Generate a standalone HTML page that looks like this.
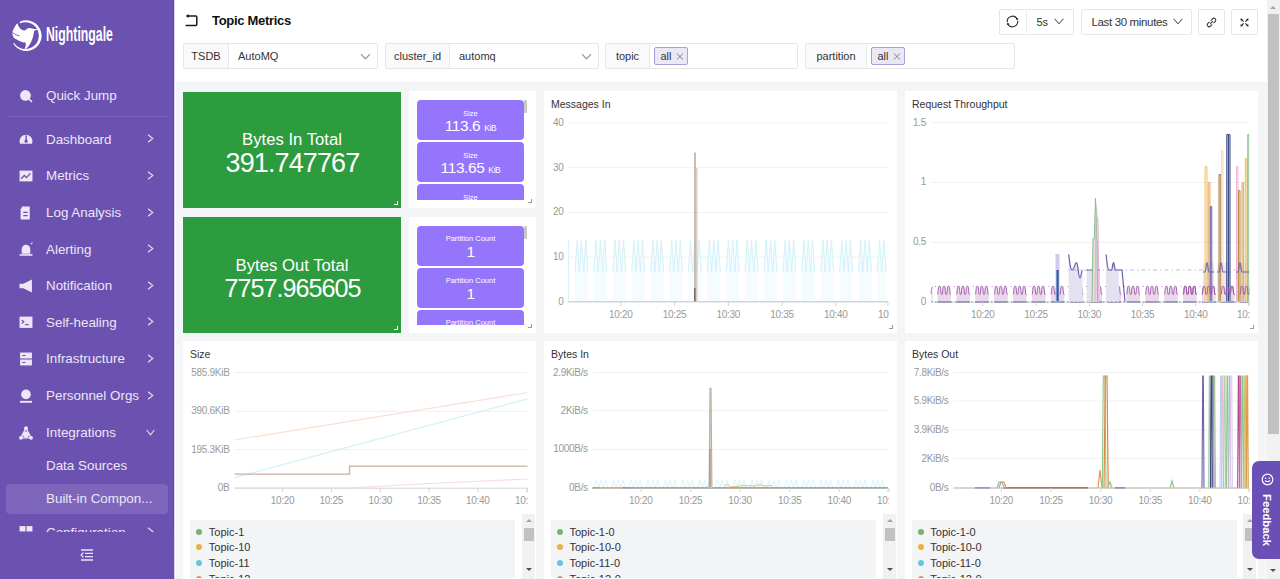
<!DOCTYPE html><html><head><meta charset="utf-8"><style>
*{box-sizing:border-box;margin:0;padding:0}
html,body{width:1280px;height:579px;overflow:hidden;background:#fff;font-family:"Liberation Sans", sans-serif;}
.a{position:absolute}
.sb{left:0;top:0;width:174px;height:579px;background:#6b51b0;box-shadow:inset -1px 0 0 #6049a6, 0.5px 0 0 #b3a6d6}
.mi{position:absolute;left:46px;font-size:13.4px;color:#ece6f7;white-space:nowrap;line-height:16px}
.chev{position:absolute;left:146px;width:6px;height:6px;border-right:1.3px solid #e6def5;border-top:1.3px solid #e6def5;transform:rotate(45deg)}
.chevd{position:absolute;left:146px;width:6px;height:6px;border-right:1.3px solid #e6def5;border-bottom:1.3px solid #e6def5;transform:rotate(45deg)}
.content{left:176px;top:82px;width:1091px;height:497px;background:#f4f5f7}
.fl{position:absolute;top:43px;height:26px;border:1px solid #e6e6e6;border-radius:2px;background:#fff}
.fll{position:absolute;left:0;top:0;height:24px;background:#fafafa;border-right:1px solid #e8e8e8;font-size:11px;color:#333;line-height:24px;text-align:center}
.flv{position:absolute;top:0;font-size:11px;color:#333;line-height:24px}
.tag{position:absolute;top:3.2px;height:17.6px;background:#ebe8f6;border:1px solid #ab9fd6;border-radius:2px;font-size:11px;color:#333;line-height:15px;padding-left:6px}
.btn{position:absolute;top:8.6px;height:26.6px;border:1px solid #e6e6e6;border-radius:2px;background:#fff;font-size:11px;color:#333;line-height:24px}
.pn{position:absolute;background:#fff}
.pt{position:absolute;left:7px;top:5px;font-size:10.5px;color:#333;white-space:nowrap}
.yl{position:absolute;font-size:10px;letter-spacing:-0.3px;color:#999;text-align:right;white-space:nowrap;line-height:12px}
.xl{position:absolute;font-size:10px;letter-spacing:-0.3px;color:#999;white-space:nowrap;line-height:12px}
.grn{position:absolute;background:#2c9c3f;color:#fff;text-align:center}
.card{position:absolute;left:8px;width:107px;height:40px;background:#9575fb;border-radius:4px;color:#fff;text-align:center}
.lg{position:absolute;background:#f3f4f6;font-size:11px;color:#333}
.li{position:absolute;left:18px;white-space:nowrap;line-height:14px}
.dot{position:absolute;left:-12px;top:4px;width:6px;height:6px;border-radius:50%}
</style></head><body><div class="a sb">
<svg class="a" style="left:10px;top:17px" width="34" height="36" viewBox="0 0 34 36">
<path d="M9.83 4.83 A15.3 15.3 0 1 1 3.32 26.81 L4.04 25.80 A13.4 13.4 0 1 0 9.74 6.56 Z" fill="#fff"/>
<path d="M7.46 6.2 C8.5 10 11 13.4 14.3 13.4 C16 13.4 17 10.9 18.6 10.9 C20.5 10.9 22 11.8 29.2 12.1 C26.5 12.8 24.8 13.3 24.2 14 C23.8 16 23.4 17.5 23.3 18.6 C22.8 21 22.2 23 21.1 24.9 C19.5 28.5 17 31.5 13.4 33.9 C14.8 32 15.5 30 15.8 28 C15.9 27 15.8 26.2 15.5 25.5 C13 25.3 11 24.8 9.3 23.9 C7 22.8 5 21.8 3.7 20.5 C2.8 19 2.3 17.5 2.2 15.8 C2.5 14.3 3 13 3.7 11.8 C4.8 9.5 6 7.5 7.46 6.2 Z" fill="#fff"/>
<path d="M2.3 15.4 C4.5 17.2 7 18.4 9.6 18.8" fill="none" stroke="#6b51b0" stroke-width="0.9"/>
</svg>
<div class="a" style="left:45.5px;top:22px;font-size:21px;font-weight:700;color:#fff;transform:scaleX(0.585);transform-origin:0 0;letter-spacing:0px;line-height:24px">Nightingale</div>
<div class="a" style="left:7px;top:116px;width:162px;height:1px;background:#7a62bb"></div>
<div class="a" style="left:6px;top:484px;width:162px;height:30px;background:#7d66bc;border-radius:4px"></div>
<div class="mi" style="top:88.0px">Quick Jump</div>
<svg class="a" style="left:19px;top:88.5px" width="14" height="14" viewBox="0 0 13 13"><circle cx="6" cy="6" r="5" fill="#ece6f7"/><path d="M9.5 9.5 L12 12" stroke="#ece6f7" stroke-width="1.5"/></svg>
<div class="mi" style="top:131.5px">Dashboard</div>
<svg class="a" style="left:19px;top:132.0px" width="14" height="14" viewBox="0 0 13 13"><path d="M1 11 A6 6 0 1 1 12 11 Z" fill="#ece6f7"/><rect x="6" y="3" width="1.3" height="5" fill="#6b51b0"/><circle cx="6.6" cy="8.5" r="1.5" fill="#6b51b0"/></svg>
<svg class="a" style="left:147px;top:134.0px" width="7" height="9" viewBox="0 0 7 9"><path d="M1 0.7 L5.8 4.5 L1 8.3" stroke="#e6def5" stroke-width="1.1" fill="none"/></svg>
<div class="mi" style="top:168.3px">Metrics</div>
<svg class="a" style="left:19px;top:168.8px" width="14" height="14" viewBox="0 0 13 13"><rect x="0.5" y="1.5" width="12" height="10" fill="#ece6f7"/><path d="M2 9 L5 6 L7 8 L10.5 4" stroke="#6b51b0" stroke-width="1.2" fill="none"/></svg>
<svg class="a" style="left:147px;top:170.8px" width="7" height="9" viewBox="0 0 7 9"><path d="M1 0.7 L5.8 4.5 L1 8.3" stroke="#e6def5" stroke-width="1.1" fill="none"/></svg>
<div class="mi" style="top:205.0px">Log Analysis</div>
<svg class="a" style="left:19px;top:205.5px" width="14" height="14" viewBox="0 0 13 13"><path d="M3 0.5 H10 V12.5 H1.5 V3 Z" fill="#ece6f7"/><path d="M4 6 H8 M4 9 H8" stroke="#6b51b0" stroke-width="1.1"/></svg>
<svg class="a" style="left:147px;top:207.5px" width="7" height="9" viewBox="0 0 7 9"><path d="M1 0.7 L5.8 4.5 L1 8.3" stroke="#e6def5" stroke-width="1.1" fill="none"/></svg>
<div class="mi" style="top:241.5px">Alerting</div>
<svg class="a" style="left:19px;top:242.0px" width="14" height="14" viewBox="0 0 13 13"><path d="M2.5 11 V6.5 A4 4 0 0 1 10.5 6.5 V11 Z" fill="#ece6f7"/><rect x="0.5" y="11.3" width="12" height="1.5" fill="#ece6f7"/><path d="M11 2 L12.5 0.5" stroke="#ece6f7" stroke-width="1"/></svg>
<svg class="a" style="left:147px;top:244.0px" width="7" height="9" viewBox="0 0 7 9"><path d="M1 0.7 L5.8 4.5 L1 8.3" stroke="#e6def5" stroke-width="1.1" fill="none"/></svg>
<div class="mi" style="top:278.0px">Notification</div>
<svg class="a" style="left:19px;top:278.5px" width="14" height="14" viewBox="0 0 13 13"><path d="M0.5 4.5 H4 L12 0.5 V12.5 L4 8.5 H0.5 Z" fill="#ece6f7"/></svg>
<svg class="a" style="left:147px;top:280.5px" width="7" height="9" viewBox="0 0 7 9"><path d="M1 0.7 L5.8 4.5 L1 8.3" stroke="#e6def5" stroke-width="1.1" fill="none"/></svg>
<div class="mi" style="top:314.7px">Self-healing</div>
<svg class="a" style="left:19px;top:315.2px" width="14" height="14" viewBox="0 0 13 13"><rect x="0.5" y="1.5" width="12" height="10.5" fill="#ece6f7"/><path d="M2.5 4.5 L4.5 6.3 L2.5 8" stroke="#6b51b0" stroke-width="1.1" fill="none"/><path d="M5.5 9 H9" stroke="#6b51b0" stroke-width="1.1"/></svg>
<svg class="a" style="left:147px;top:317.2px" width="7" height="9" viewBox="0 0 7 9"><path d="M1 0.7 L5.8 4.5 L1 8.3" stroke="#e6def5" stroke-width="1.1" fill="none"/></svg>
<div class="mi" style="top:351.3px">Infrastructure</div>
<svg class="a" style="left:19px;top:351.8px" width="14" height="14" viewBox="0 0 13 13"><rect x="1" y="0.5" width="11" height="5.5" fill="#ece6f7"/><rect x="1" y="7" width="11" height="5.5" fill="#ece6f7"/><path d="M3 3.3 H6 M3 9.8 H6" stroke="#6b51b0" stroke-width="1"/></svg>
<svg class="a" style="left:147px;top:353.8px" width="7" height="9" viewBox="0 0 7 9"><path d="M1 0.7 L5.8 4.5 L1 8.3" stroke="#e6def5" stroke-width="1.1" fill="none"/></svg>
<div class="mi" style="top:388.0px">Personnel Orgs</div>
<svg class="a" style="left:19px;top:388.5px" width="14" height="14" viewBox="0 0 13 13"><circle cx="6.5" cy="5" r="4.5" fill="#ece6f7"/><rect x="1" y="11" width="11" height="1.8" fill="#ece6f7"/></svg>
<svg class="a" style="left:147px;top:390.5px" width="7" height="9" viewBox="0 0 7 9"><path d="M1 0.7 L5.8 4.5 L1 8.3" stroke="#e6def5" stroke-width="1.1" fill="none"/></svg>
<div class="mi" style="top:425.0px">Integrations</div>
<svg class="a" style="left:19px;top:425.5px" width="14" height="14" viewBox="0 0 13 13"><circle cx="6.5" cy="2" r="1.8" fill="#ece6f7"/><circle cx="1.8" cy="11" r="1.8" fill="#ece6f7"/><circle cx="11.2" cy="11" r="1.8" fill="#ece6f7"/><path d="M6.5 2 L1.8 11 H11.2 Z" fill="none" stroke="#ece6f7" stroke-width="1.3"/><circle cx="6.5" cy="8" r="2.8" fill="#ece6f7"/></svg>
<svg class="a" style="left:146px;top:429.0px" width="9" height="7" viewBox="0 0 9 7"><path d="M0.7 1 L4.5 5.8 L8.3 1" stroke="#e6def5" stroke-width="1.1" fill="none"/></svg>
<div class="mi" style="top:458.4px">Data Sources</div>
<div class="mi" style="top:491.4px">Built-in Compon...</div>
<div class="mi" style="top:524.5px">Configuration</div>
<svg class="a" style="left:19px;top:525.0px" width="14" height="14" viewBox="0 0 13 13"><rect x="0.5" y="1" width="5.5" height="5" fill="#ece6f7"/><rect x="7" y="1" width="5.5" height="5" fill="#ece6f7"/></svg>
<svg class="a" style="left:147px;top:527.0px" width="7" height="9" viewBox="0 0 7 9"><path d="M1 0.7 L5.8 4.5 L1 8.3" stroke="#e6def5" stroke-width="1.1" fill="none"/></svg>
<div class="a" style="left:0;top:532px;width:174px;height:47px;background:#6b51b0"></div>
<svg class="a" style="left:80px;top:549px" width="14" height="12" viewBox="0 0 14 12"><path d="M1 1 H13 M5 4.3 H13 M5 7.6 H13 M1 11 H13" stroke="#ece6f7" stroke-width="1.3"/><path d="M3.5 3.5 L1 6 L3.5 8.5" stroke="#ece6f7" stroke-width="1.1" fill="none"/></svg>
</div>
<svg class="a" style="left:184px;top:13px" width="15" height="15" viewBox="0 0 15 15"><path d="M3.5 3 H11.7 Q12.8 3 12.8 4.1 V11.3 Q12.8 12.5 11.7 12.5 H1.6" stroke="#1a1a1a" stroke-width="1.5" fill="none"/><path d="M1.8 3 L4.6 0.9 V5.1 Z" fill="#1a1a1a"/></svg>
<div class="a" style="left:212px;top:13px;font-size:13px;font-weight:700;color:#111;white-space:nowrap;letter-spacing:-0.3px">Topic Metrics</div>
<div class="fl" style="left:183px;width:194.5px">
<div class="fll" style="width:45px">TSDB</div>
<div class="flv" style="left:54px">AutoMQ</div>
<div class="a" style="left:177.5px;top:7px;width:7px;height:7px;border-right:1px solid #888;border-bottom:1px solid #888;transform:rotate(45deg)"></div>
</div>
<div class="fl" style="left:385px;width:213.5px">
<div class="fll" style="width:64px">cluster_id</div>
<div class="flv" style="left:73px">automq</div>
<div class="a" style="left:196.5px;top:7px;width:7px;height:7px;border-right:1px solid #888;border-bottom:1px solid #888;transform:rotate(45deg)"></div>
</div>
<div class="fl" style="left:605px;width:192.5px">
<div class="fll" style="width:44px">topic</div>
<div class="tag" style="left:47.5px;width:34.5px;line-height:16px">all<svg style="position:absolute;left:21.5px;top:4.8px" width="8" height="7" viewBox="0 0 8 7"><path d="M0.8 0.5 L7 6.5 M7 0.5 L0.8 6.5" stroke="#777" stroke-width="0.9"/></svg></div>
</div>
<div class="fl" style="left:805px;width:210.0px">
<div class="fll" style="width:61px">partition</div>
<div class="tag" style="left:64.5px;width:34.5px;line-height:16px">all<svg style="position:absolute;left:21.5px;top:4.8px" width="8" height="7" viewBox="0 0 8 7"><path d="M0.8 0.5 L7 6.5 M7 0.5 L0.8 6.5" stroke="#777" stroke-width="0.9"/></svg></div>
</div>
<div class="btn" style="left:999px;width:27.5px"><svg class="a" style="left:5px;top:4.3px" width="15" height="15" viewBox="0 0 15 15"><path d="M12.09 5.06 A5.2 5.2 0 0 0 2.35 8.22" stroke="#333" stroke-width="1.15" fill="none"/><path d="M2.91 9.94 A5.2 5.2 0 0 0 12.65 6.78" stroke="#333" stroke-width="1.15" fill="none"/><circle cx="12.09" cy="5.06" r="1.05" fill="#222"/><circle cx="2.91" cy="9.94" r="1.05" fill="#222"/></svg></div>
<div class="btn" style="left:1026px;width:48px;border-left:1px solid #ececec"><span class="a" style="left:9.5px;font-size:11px">5s</span><svg class="a" style="left:27px;top:8px" width="10" height="7" viewBox="0 0 10 7"><path d="M0.6 0.8 L5 5.8 L9.4 0.8" stroke="#333" stroke-width="1" fill="none"/></svg></div>
<div class="btn" style="left:1081px;width:111px"><span class="a" style="left:9.5px;font-size:11.5px;letter-spacing:-0.35px">Last 30 minutes</span><svg class="a" style="left:91px;top:8px" width="10" height="7" viewBox="0 0 10 7"><path d="M0.6 0.8 L5 5.8 L9.4 0.8" stroke="#333" stroke-width="1" fill="none"/></svg></div>
<div class="btn" style="left:1198px;width:26.5px"><svg class="a" style="left:6px;top:6px" width="13" height="13" viewBox="0 0 13 13"><g transform="rotate(-45 6.5 6.5)"><path d="M5.6 4.6 H3.2 A1.9 1.9 0 0 0 3.2 8.4 H5.6" stroke="#333" stroke-width="1.05" fill="none"/><path d="M7.4 4.6 H9.8 A1.9 1.9 0 0 1 9.8 8.4 H7.4" stroke="#333" stroke-width="1.05" fill="none"/><path d="M4.6 6.5 H8.4" stroke="#333" stroke-width="1.05"/></g></svg></div>
<div class="btn" style="left:1231px;width:26.5px"><svg class="a" style="left:6px;top:6px" width="13" height="13" viewBox="0 0 13 13"><path d="M3.2 3.2 L5.6 5.6 M9.8 3.2 L7.4 5.6 M3.2 9.8 L5.6 7.4 M9.8 9.8 L7.4 7.4" stroke="#222" stroke-width="1.05"/><path d="M2.4 2.4 L4.9 2.9 L2.9 4.9Z M10.6 2.4 L8.1 2.9 L10.1 4.9Z M2.4 10.6 L4.9 10.1 L2.9 8.1Z M10.6 10.6 L8.1 10.1 L10.1 8.1Z" fill="#222"/></svg></div>
<div class="a content"></div>
<div class="grn" style="left:183px;top:91.5px;width:218px;height:116.0px">
<div class="a" style="left:0;width:218px;top:40.3px;font-size:16.7px;line-height:16.7px;white-space:nowrap">Bytes In Total</div>
<div class="a" style="left:0;width:218px;top:58.9px;font-size:27px;line-height:27px;white-space:nowrap;letter-spacing:-0.9px;text-indent:0.9px">391.747767</div>
<div class="a" style="left:211px;top:109.0px;width:4px;height:4px;border-right:1px solid #fff;border-bottom:1px solid #fff"></div>
</div>
<div class="grn" style="left:183px;top:216.5px;width:218px;height:116.5px">
<div class="a" style="left:0;width:218px;top:41.5px;font-size:16.7px;line-height:16.7px;white-space:nowrap">Bytes Out Total</div>
<div class="a" style="left:0;width:218px;top:59.6px;font-size:25.2px;line-height:25.2px;white-space:nowrap;letter-spacing:-1.0px;text-indent:1.0px">7757.965605</div>
<div class="a" style="left:211px;top:109.5px;width:4px;height:4px;border-right:1px solid #fff;border-bottom:1px solid #fff"></div>
</div>
<div class="pn" style="left:409px;top:91px;width:127px;height:116.5px;overflow:hidden">
<div class="a" style="left:0;top:9px;width:127px;height:99.5px;overflow:hidden">
<div class="card" style="top:0.0px">
<div class="a" style="left:0;width:107px;top:8.5px;font-size:7.5px;line-height:9px">Size</div>
<div class="a" style="left:0;width:107px;top:17px;font-size:15.5px;line-height:18px;white-space:nowrap;letter-spacing:-0.4px">113.6 <span style="font-size:8.5px">KiB</span></div>
</div>
<div class="card" style="top:42.2px">
<div class="a" style="left:0;width:107px;top:8.5px;font-size:7.5px;line-height:9px">Size</div>
<div class="a" style="left:0;width:107px;top:17px;font-size:15.5px;line-height:18px;white-space:nowrap;letter-spacing:-0.4px">113.65 <span style="font-size:8.5px">KiB</span></div>
</div>
<div class="card" style="top:84.4px">
<div class="a" style="left:0;width:107px;top:8.5px;font-size:7.5px;line-height:9px">Size</div>
<div class="a" style="left:0;width:107px;top:17px;font-size:15.5px;line-height:18px;white-space:nowrap;letter-spacing:-0.4px">113.6 <span style="font-size:8.5px">KiB</span></div>
</div>
</div>
<div class="a" style="left:115px;top:9px;width:3px;height:13px;background:#c8c8c8;border-radius:1px"></div>
<div class="a" style="left:119px;top:107.5px;width:4px;height:4px;border-right:1px solid #999;border-bottom:1px solid #999"></div>
</div>
<div class="pn" style="left:409px;top:216.5px;width:127px;height:116.5px;overflow:hidden">
<div class="a" style="left:0;top:9px;width:127px;height:99.5px;overflow:hidden">
<div class="card" style="top:0.0px">
<div class="a" style="left:0;width:107px;top:8.5px;font-size:7.5px;line-height:9px">Partition Count</div>
<div class="a" style="left:0;width:107px;top:17px;font-size:15.5px;line-height:18px;white-space:nowrap;letter-spacing:-0.4px">1</div>
</div>
<div class="card" style="top:42.2px">
<div class="a" style="left:0;width:107px;top:8.5px;font-size:7.5px;line-height:9px">Partition Count</div>
<div class="a" style="left:0;width:107px;top:17px;font-size:15.5px;line-height:18px;white-space:nowrap;letter-spacing:-0.4px">1</div>
</div>
<div class="card" style="top:84.4px">
<div class="a" style="left:0;width:107px;top:8.5px;font-size:7.5px;line-height:9px">Partition Count</div>
<div class="a" style="left:0;width:107px;top:17px;font-size:15.5px;line-height:18px;white-space:nowrap;letter-spacing:-0.4px">1</div>
</div>
</div>
<div class="a" style="left:115px;top:9px;width:3px;height:13px;background:#c8c8c8;border-radius:1px"></div>
<div class="a" style="left:119px;top:107.5px;width:4px;height:4px;border-right:1px solid #999;border-bottom:1px solid #999"></div>
</div>
<div class="pn" style="left:544px;top:91px;width:353.0px;height:242.0px;overflow:hidden">
<div class="pt" style="top:6.5px">Messages In</div>
<svg class="a" style="left:0;top:0" width="353.0" height="242.0" viewBox="544 91 353.0 242.0"><line x1="568" y1="123.0" x2="888" y2="123.0" stroke="#f1f1f1" stroke-width="1"/><line x1="568" y1="167.7" x2="888" y2="167.7" stroke="#f1f1f1" stroke-width="1"/><line x1="568" y1="212.4" x2="888" y2="212.4" stroke="#f1f1f1" stroke-width="1"/><line x1="568" y1="257.0" x2="888" y2="257.0" stroke="#f1f1f1" stroke-width="1"/><defs><clipPath id="c54491"><rect x="567" y="91" width="321.5" height="213"/></clipPath></defs><g clip-path="url(#c54491)"><polygon points="575.0,302 575.0,272.0 577.2,240.0 579.3,272.0 581.5,240.0 583.7,272.0 585.8,240.0 588.0,272.0 588.0,302" fill="#f4fcfd"/><polyline points="575.0,272.0 577.2,240.0 579.3,272.0 581.5,240.0 583.7,272.0 585.8,240.0 588.0,272.0" fill="none" stroke="#cff1f7" stroke-width="0.9" opacity="1"/><polygon points="593.9,302 593.9,272.0 596.1,240.0 598.2,272.0 600.4,240.0 602.6,272.0 604.7,240.0 606.9,272.0 606.9,302" fill="#f4fcfd"/><polyline points="593.9,272.0 596.1,240.0 598.2,272.0 600.4,240.0 602.6,272.0 604.7,240.0 606.9,272.0" fill="none" stroke="#cff1f7" stroke-width="0.9" opacity="1"/><polygon points="612.8,302 612.8,272.0 615.0,240.0 617.1,272.0 619.3,240.0 621.5,272.0 623.6,240.0 625.8,272.0 625.8,302" fill="#f4fcfd"/><polyline points="612.8,272.0 615.0,240.0 617.1,272.0 619.3,240.0 621.5,272.0 623.6,240.0 625.8,272.0" fill="none" stroke="#cff1f7" stroke-width="0.9" opacity="1"/><polygon points="631.7,302 631.7,272.0 633.9,240.0 636.0,272.0 638.2,240.0 640.4,272.0 642.5,240.0 644.7,272.0 644.7,302" fill="#f4fcfd"/><polyline points="631.7,272.0 633.9,240.0 636.0,272.0 638.2,240.0 640.4,272.0 642.5,240.0 644.7,272.0" fill="none" stroke="#cff1f7" stroke-width="0.9" opacity="1"/><polygon points="650.6,302 650.6,272.0 652.8,240.0 654.9,272.0 657.1,240.0 659.3,272.0 661.4,240.0 663.6,272.0 663.6,302" fill="#f4fcfd"/><polyline points="650.6,272.0 652.8,240.0 654.9,272.0 657.1,240.0 659.3,272.0 661.4,240.0 663.6,272.0" fill="none" stroke="#cff1f7" stroke-width="0.9" opacity="1"/><polygon points="669.5,302 669.5,272.0 671.7,240.0 673.8,272.0 676.0,240.0 678.2,272.0 680.3,240.0 682.5,272.0 682.5,302" fill="#f4fcfd"/><polyline points="669.5,272.0 671.7,240.0 673.8,272.0 676.0,240.0 678.2,272.0 680.3,240.0 682.5,272.0" fill="none" stroke="#cff1f7" stroke-width="0.9" opacity="1"/><polygon points="688.4,302 688.4,272.0 690.6,240.0 692.7,272.0 694.9,240.0 697.1,272.0 699.2,240.0 701.4,272.0 701.4,302" fill="#f4fcfd"/><polyline points="688.4,272.0 690.6,240.0 692.7,272.0 694.9,240.0 697.1,272.0 699.2,240.0 701.4,272.0" fill="none" stroke="#cff1f7" stroke-width="0.9" opacity="1"/><polygon points="707.3,302 707.3,272.0 709.5,240.0 711.6,272.0 713.8,240.0 716.0,272.0 718.1,240.0 720.3,272.0 720.3,302" fill="#f4fcfd"/><polyline points="707.3,272.0 709.5,240.0 711.6,272.0 713.8,240.0 716.0,272.0 718.1,240.0 720.3,272.0" fill="none" stroke="#cff1f7" stroke-width="0.9" opacity="1"/><polygon points="726.2,302 726.2,272.0 728.4,240.0 730.5,272.0 732.7,240.0 734.9,272.0 737.0,240.0 739.2,272.0 739.2,302" fill="#f4fcfd"/><polyline points="726.2,272.0 728.4,240.0 730.5,272.0 732.7,240.0 734.9,272.0 737.0,240.0 739.2,272.0" fill="none" stroke="#cff1f7" stroke-width="0.9" opacity="1"/><polygon points="745.1,302 745.1,272.0 747.3,240.0 749.4,272.0 751.6,240.0 753.8,272.0 755.9,240.0 758.1,272.0 758.1,302" fill="#f4fcfd"/><polyline points="745.1,272.0 747.3,240.0 749.4,272.0 751.6,240.0 753.8,272.0 755.9,240.0 758.1,272.0" fill="none" stroke="#cff1f7" stroke-width="0.9" opacity="1"/><polygon points="764.0,302 764.0,272.0 766.2,240.0 768.3,272.0 770.5,240.0 772.7,272.0 774.8,240.0 777.0,272.0 777.0,302" fill="#f4fcfd"/><polyline points="764.0,272.0 766.2,240.0 768.3,272.0 770.5,240.0 772.7,272.0 774.8,240.0 777.0,272.0" fill="none" stroke="#cff1f7" stroke-width="0.9" opacity="1"/><polygon points="782.9,302 782.9,272.0 785.1,240.0 787.2,272.0 789.4,240.0 791.6,272.0 793.7,240.0 795.9,272.0 795.9,302" fill="#f4fcfd"/><polyline points="782.9,272.0 785.1,240.0 787.2,272.0 789.4,240.0 791.6,272.0 793.7,240.0 795.9,272.0" fill="none" stroke="#cff1f7" stroke-width="0.9" opacity="1"/><polygon points="801.8,302 801.8,272.0 804.0,240.0 806.1,272.0 808.3,240.0 810.5,272.0 812.6,240.0 814.8,272.0 814.8,302" fill="#f4fcfd"/><polyline points="801.8,272.0 804.0,240.0 806.1,272.0 808.3,240.0 810.5,272.0 812.6,240.0 814.8,272.0" fill="none" stroke="#cff1f7" stroke-width="0.9" opacity="1"/><polygon points="820.7,302 820.7,272.0 822.9,240.0 825.0,272.0 827.2,240.0 829.4,272.0 831.5,240.0 833.7,272.0 833.7,302" fill="#f4fcfd"/><polyline points="820.7,272.0 822.9,240.0 825.0,272.0 827.2,240.0 829.4,272.0 831.5,240.0 833.7,272.0" fill="none" stroke="#cff1f7" stroke-width="0.9" opacity="1"/><polygon points="839.6,302 839.6,272.0 841.8,240.0 843.9,272.0 846.1,240.0 848.3,272.0 850.4,240.0 852.6,272.0 852.6,302" fill="#f4fcfd"/><polyline points="839.6,272.0 841.8,240.0 843.9,272.0 846.1,240.0 848.3,272.0 850.4,240.0 852.6,272.0" fill="none" stroke="#cff1f7" stroke-width="0.9" opacity="1"/><polygon points="858.5,302 858.5,272.0 860.7,240.0 862.8,272.0 865.0,240.0 867.2,272.0 869.3,240.0 871.5,272.0 871.5,302" fill="#f4fcfd"/><polyline points="858.5,272.0 860.7,240.0 862.8,272.0 865.0,240.0 867.2,272.0 869.3,240.0 871.5,272.0" fill="none" stroke="#cff1f7" stroke-width="0.9" opacity="1"/><polygon points="877.4,302 877.4,272.0 879.6,240.0 881.7,272.0 883.9,240.0 886.1,272.0 886.1,302" fill="#f4fcfd"/><polyline points="877.4,272.0 879.6,240.0 881.7,272.0 883.9,240.0 886.1,272.0" fill="none" stroke="#cff1f7" stroke-width="0.9" opacity="1"/><line x1="568" y1="301.5" x2="888" y2="301.5" stroke="#dccfc2" stroke-width="1.2"/><line x1="568.5" y1="302" x2="568.5" y2="240" stroke="#d2f1f7" stroke-width="0.9"/><line x1="695" y1="302" x2="695" y2="152.5" stroke="#c2b6aa" stroke-width="1.8"/><line x1="696.8" y1="302" x2="696.8" y2="168" stroke="#d0c6bc" stroke-width="1.3"/><line x1="694.8" y1="302" x2="694.8" y2="288" stroke="#7d7060" stroke-width="1.6"/></g><line x1="568" y1="302.0" x2="888" y2="302.0" stroke="#d6d6d6" stroke-width="1"/><line x1="620.8" y1="302.0" x2="620.8" y2="306.0" stroke="#d6d6d6" stroke-width="1"/><line x1="674.6" y1="302.0" x2="674.6" y2="306.0" stroke="#d6d6d6" stroke-width="1"/><line x1="728.4" y1="302.0" x2="728.4" y2="306.0" stroke="#d6d6d6" stroke-width="1"/><line x1="782.2" y1="302.0" x2="782.2" y2="306.0" stroke="#d6d6d6" stroke-width="1"/><line x1="836.0" y1="302.0" x2="836.0" y2="306.0" stroke="#d6d6d6" stroke-width="1"/><line x1="888.0" y1="302.0" x2="888.0" y2="306.0" stroke="#d6d6d6" stroke-width="1"/></svg>
<div class="yl" style="right:333.5px;top:26.0px">40</div>
<div class="yl" style="right:333.5px;top:70.7px">30</div>
<div class="yl" style="right:333.5px;top:115.4px">20</div>
<div class="yl" style="right:333.5px;top:160.0px">10</div>
<div class="yl" style="right:333.5px;top:204.8px">0</div>
<div class="a" style="left:0;top:0;width:344.8px;height:242px;overflow:hidden">
<div class="xl" style="left:56.8px;width:40px;text-align:center;text-indent:-0.3px;top:218.0px">10:20</div>
<div class="xl" style="left:110.6px;width:40px;text-align:center;text-indent:-0.3px;top:218.0px">10:25</div>
<div class="xl" style="left:164.4px;width:40px;text-align:center;text-indent:-0.3px;top:218.0px">10:30</div>
<div class="xl" style="left:218.2px;width:40px;text-align:center;text-indent:-0.3px;top:218.0px">10:35</div>
<div class="xl" style="left:272.0px;width:40px;text-align:center;text-indent:-0.3px;top:218.0px">10:40</div>
<div class="xl" style="left:325.8px;width:40px;text-align:center;text-indent:-0.3px;top:218.0px">10:45</div>
</div>
<div class="a" style="left:345px;top:234px;width:4px;height:4px;border-right:1px solid #999;border-bottom:1px solid #999"></div>
</div>
<div class="pn" style="left:905px;top:91px;width:352.5px;height:242.0px;overflow:hidden">
<div class="pt" style="top:6.5px">Request Throughput</div>
<svg class="a" style="left:0;top:0" width="352.5" height="242.0" viewBox="905 91 352.5 242.0"><line x1="931" y1="122.7" x2="1248.7" y2="122.7" stroke="#f1f1f1" stroke-width="1"/><line x1="931" y1="182.4" x2="1248.7" y2="182.4" stroke="#f1f1f1" stroke-width="1"/><line x1="931" y1="242.4" x2="1248.7" y2="242.4" stroke="#f1f1f1" stroke-width="1"/><defs><clipPath id="c90591"><rect x="930" y="91" width="319.20000000000005" height="213"/></clipPath></defs><g clip-path="url(#c90591)"><path d="M937.5 294.5 C938.40 294.5 938.04 286.3 939.08 286.3 L939.98 286.3 C941.01 286.3 940.65 294.5 941.55 294.5 L942.00 294.5 C942.90 294.5 942.54 286.3 943.58 286.3 L944.48 286.3 C945.51 286.3 945.15 294.5 946.05 294.5 L946.50 294.5 C947.40 294.5 947.04 286.3 948.08 286.3 L948.98 286.3 C950.01 286.3 949.65 294.5 950.55 294.5 L951.00 294.5 L951.0 302 L937.5 302 Z" fill="#e8d8ea"/><path d="M937.5 294.5 C938.40 294.5 938.04 286.3 939.08 286.3 L939.98 286.3 C941.01 286.3 940.65 294.5 941.55 294.5 L942.00 294.5 C942.90 294.5 942.54 286.3 943.58 286.3 L944.48 286.3 C945.51 286.3 945.15 294.5 946.05 294.5 L946.50 294.5 C947.40 294.5 947.04 286.3 948.08 286.3 L948.98 286.3 C950.01 286.3 949.65 294.5 950.55 294.5 L951.00 294.5" fill="none" stroke="#9d55aa" stroke-width="0.95"/><line x1="937.5" y1="302" x2="951.0" y2="302" stroke="#3f4d88" stroke-width="1.6"/><path d="M956.4 294.5 C957.30 294.5 956.94 286.3 957.98 286.3 L958.88 286.3 C959.91 286.3 959.55 294.5 960.45 294.5 L960.90 294.5 C961.80 294.5 961.44 286.3 962.48 286.3 L963.38 286.3 C964.41 286.3 964.05 294.5 964.95 294.5 L965.40 294.5 C966.30 294.5 965.94 286.3 966.98 286.3 L967.88 286.3 C968.91 286.3 968.55 294.5 969.45 294.5 L969.90 294.5 L969.9 302 L956.4 302 Z" fill="#e8d8ea"/><path d="M956.4 294.5 C957.30 294.5 956.94 286.3 957.98 286.3 L958.88 286.3 C959.91 286.3 959.55 294.5 960.45 294.5 L960.90 294.5 C961.80 294.5 961.44 286.3 962.48 286.3 L963.38 286.3 C964.41 286.3 964.05 294.5 964.95 294.5 L965.40 294.5 C966.30 294.5 965.94 286.3 966.98 286.3 L967.88 286.3 C968.91 286.3 968.55 294.5 969.45 294.5 L969.90 294.5" fill="none" stroke="#9d55aa" stroke-width="0.95"/><line x1="956.4" y1="302" x2="969.9" y2="302" stroke="#3f4d88" stroke-width="1.6"/><path d="M975.3 294.5 C976.20 294.5 975.84 286.3 976.88 286.3 L977.77 286.3 C978.81 286.3 978.45 294.5 979.35 294.5 L979.80 294.5 C980.70 294.5 980.34 286.3 981.38 286.3 L982.27 286.3 C983.31 286.3 982.95 294.5 983.85 294.5 L984.30 294.5 C985.20 294.5 984.84 286.3 985.88 286.3 L986.77 286.3 C987.81 286.3 987.45 294.5 988.35 294.5 L988.80 294.5 L988.8 302 L975.3 302 Z" fill="#e8d8ea"/><path d="M975.3 294.5 C976.20 294.5 975.84 286.3 976.88 286.3 L977.77 286.3 C978.81 286.3 978.45 294.5 979.35 294.5 L979.80 294.5 C980.70 294.5 980.34 286.3 981.38 286.3 L982.27 286.3 C983.31 286.3 982.95 294.5 983.85 294.5 L984.30 294.5 C985.20 294.5 984.84 286.3 985.88 286.3 L986.77 286.3 C987.81 286.3 987.45 294.5 988.35 294.5 L988.80 294.5" fill="none" stroke="#9d55aa" stroke-width="0.95"/><line x1="975.3" y1="302" x2="988.8" y2="302" stroke="#3f4d88" stroke-width="1.6"/><path d="M994.2 294.5 C995.10 294.5 994.74 286.3 995.77 286.3 L996.67 286.3 C997.71 286.3 997.35 294.5 998.25 294.5 L998.70 294.5 C999.60 294.5 999.24 286.3 1000.27 286.3 L1001.17 286.3 C1002.21 286.3 1001.85 294.5 1002.75 294.5 L1003.20 294.5 C1004.10 294.5 1003.74 286.3 1004.77 286.3 L1005.67 286.3 C1006.71 286.3 1006.35 294.5 1007.25 294.5 L1007.70 294.5 L1007.7 302 L994.2 302 Z" fill="#e8d8ea"/><path d="M994.2 294.5 C995.10 294.5 994.74 286.3 995.77 286.3 L996.67 286.3 C997.71 286.3 997.35 294.5 998.25 294.5 L998.70 294.5 C999.60 294.5 999.24 286.3 1000.27 286.3 L1001.17 286.3 C1002.21 286.3 1001.85 294.5 1002.75 294.5 L1003.20 294.5 C1004.10 294.5 1003.74 286.3 1004.77 286.3 L1005.67 286.3 C1006.71 286.3 1006.35 294.5 1007.25 294.5 L1007.70 294.5" fill="none" stroke="#9d55aa" stroke-width="0.95"/><line x1="994.2" y1="302" x2="1007.7" y2="302" stroke="#3f4d88" stroke-width="1.6"/><path d="M1013.1 294.5 C1014.00 294.5 1013.64 286.3 1014.67 286.3 L1015.57 286.3 C1016.61 286.3 1016.25 294.5 1017.15 294.5 L1017.60 294.5 C1018.50 294.5 1018.14 286.3 1019.17 286.3 L1020.07 286.3 C1021.11 286.3 1020.75 294.5 1021.65 294.5 L1022.10 294.5 C1023.00 294.5 1022.64 286.3 1023.67 286.3 L1024.57 286.3 C1025.61 286.3 1025.25 294.5 1026.15 294.5 L1026.60 294.5 L1026.6 302 L1013.1 302 Z" fill="#e8d8ea"/><path d="M1013.1 294.5 C1014.00 294.5 1013.64 286.3 1014.67 286.3 L1015.57 286.3 C1016.61 286.3 1016.25 294.5 1017.15 294.5 L1017.60 294.5 C1018.50 294.5 1018.14 286.3 1019.17 286.3 L1020.07 286.3 C1021.11 286.3 1020.75 294.5 1021.65 294.5 L1022.10 294.5 C1023.00 294.5 1022.64 286.3 1023.67 286.3 L1024.57 286.3 C1025.61 286.3 1025.25 294.5 1026.15 294.5 L1026.60 294.5" fill="none" stroke="#9d55aa" stroke-width="0.95"/><line x1="1013.1" y1="302" x2="1026.6" y2="302" stroke="#3f4d88" stroke-width="1.6"/><path d="M1032.0 294.5 C1032.90 294.5 1032.54 286.3 1033.58 286.3 L1034.47 286.3 C1035.51 286.3 1035.15 294.5 1036.05 294.5 L1036.50 294.5 C1037.40 294.5 1037.04 286.3 1038.08 286.3 L1038.97 286.3 C1040.01 286.3 1039.65 294.5 1040.55 294.5 L1041.00 294.5 C1041.90 294.5 1041.54 286.3 1042.58 286.3 L1043.47 286.3 C1044.51 286.3 1044.15 294.5 1045.05 294.5 L1045.50 294.5 L1045.5 302 L1032.0 302 Z" fill="#e8d8ea"/><path d="M1032.0 294.5 C1032.90 294.5 1032.54 286.3 1033.58 286.3 L1034.47 286.3 C1035.51 286.3 1035.15 294.5 1036.05 294.5 L1036.50 294.5 C1037.40 294.5 1037.04 286.3 1038.08 286.3 L1038.97 286.3 C1040.01 286.3 1039.65 294.5 1040.55 294.5 L1041.00 294.5 C1041.90 294.5 1041.54 286.3 1042.58 286.3 L1043.47 286.3 C1044.51 286.3 1044.15 294.5 1045.05 294.5 L1045.50 294.5" fill="none" stroke="#9d55aa" stroke-width="0.95"/><line x1="1032.0" y1="302" x2="1045.5" y2="302" stroke="#3f4d88" stroke-width="1.6"/><path d="M1050.9 294.5 C1051.80 294.5 1051.44 286.3 1052.48 286.3 L1053.38 286.3 C1054.41 286.3 1054.05 294.5 1054.95 294.5 L1055.40 294.5 C1056.30 294.5 1055.94 286.3 1056.98 286.3 L1057.88 286.3 C1058.91 286.3 1058.55 294.5 1059.45 294.5 L1059.90 294.5 C1060.80 294.5 1060.44 286.3 1061.48 286.3 L1062.38 286.3 C1063.41 286.3 1063.05 294.5 1063.95 294.5 L1064.40 294.5 L1064.4 302 L1050.9 302 Z" fill="#e8d8ea"/><path d="M1050.9 294.5 C1051.80 294.5 1051.44 286.3 1052.48 286.3 L1053.38 286.3 C1054.41 286.3 1054.05 294.5 1054.95 294.5 L1055.40 294.5 C1056.30 294.5 1055.94 286.3 1056.98 286.3 L1057.88 286.3 C1058.91 286.3 1058.55 294.5 1059.45 294.5 L1059.90 294.5 C1060.80 294.5 1060.44 286.3 1061.48 286.3 L1062.38 286.3 C1063.41 286.3 1063.05 294.5 1063.95 294.5 L1064.40 294.5" fill="none" stroke="#9d55aa" stroke-width="0.95"/><line x1="1050.9" y1="302" x2="1064.4" y2="302" stroke="#3f4d88" stroke-width="1.6"/><path d="M1069.8 294.5 C1070.70 294.5 1070.34 286.3 1071.38 286.3 L1072.28 286.3 C1073.31 286.3 1072.95 294.5 1073.85 294.5 L1074.30 294.5 C1075.20 294.5 1074.84 286.3 1075.88 286.3 L1076.78 286.3 C1077.81 286.3 1077.45 294.5 1078.35 294.5 L1078.80 294.5 C1079.70 294.5 1079.34 286.3 1080.38 286.3 L1081.28 286.3 C1082.31 286.3 1081.95 294.5 1082.85 294.5 L1083.30 294.5 L1083.3 302 L1069.8 302 Z" fill="#e8d8ea"/><path d="M1069.8 294.5 C1070.70 294.5 1070.34 286.3 1071.38 286.3 L1072.28 286.3 C1073.31 286.3 1072.95 294.5 1073.85 294.5 L1074.30 294.5 C1075.20 294.5 1074.84 286.3 1075.88 286.3 L1076.78 286.3 C1077.81 286.3 1077.45 294.5 1078.35 294.5 L1078.80 294.5 C1079.70 294.5 1079.34 286.3 1080.38 286.3 L1081.28 286.3 C1082.31 286.3 1081.95 294.5 1082.85 294.5 L1083.30 294.5" fill="none" stroke="#9d55aa" stroke-width="0.95"/><line x1="1069.8" y1="302" x2="1083.3" y2="302" stroke="#3f4d88" stroke-width="1.6"/><path d="M1088.7 294.5 C1089.60 294.5 1089.24 286.3 1090.28 286.3 L1091.18 286.3 C1092.21 286.3 1091.85 294.5 1092.75 294.5 L1093.20 294.5 C1094.10 294.5 1093.74 286.3 1094.78 286.3 L1095.68 286.3 C1096.71 286.3 1096.35 294.5 1097.25 294.5 L1097.70 294.5 C1098.60 294.5 1098.24 286.3 1099.28 286.3 L1100.18 286.3 C1101.21 286.3 1100.85 294.5 1101.75 294.5 L1102.20 294.5 L1102.2 302 L1088.7 302 Z" fill="#e8d8ea"/><path d="M1088.7 294.5 C1089.60 294.5 1089.24 286.3 1090.28 286.3 L1091.18 286.3 C1092.21 286.3 1091.85 294.5 1092.75 294.5 L1093.20 294.5 C1094.10 294.5 1093.74 286.3 1094.78 286.3 L1095.68 286.3 C1096.71 286.3 1096.35 294.5 1097.25 294.5 L1097.70 294.5 C1098.60 294.5 1098.24 286.3 1099.28 286.3 L1100.18 286.3 C1101.21 286.3 1100.85 294.5 1101.75 294.5 L1102.20 294.5" fill="none" stroke="#9d55aa" stroke-width="0.95"/><line x1="1088.7" y1="302" x2="1102.2" y2="302" stroke="#3f4d88" stroke-width="1.6"/><path d="M1107.6 294.5 C1108.50 294.5 1108.14 286.3 1109.18 286.3 L1110.08 286.3 C1111.11 286.3 1110.75 294.5 1111.65 294.5 L1112.10 294.5 C1113.00 294.5 1112.64 286.3 1113.68 286.3 L1114.58 286.3 C1115.61 286.3 1115.25 294.5 1116.15 294.5 L1116.60 294.5 C1117.50 294.5 1117.14 286.3 1118.18 286.3 L1119.08 286.3 C1120.11 286.3 1119.75 294.5 1120.65 294.5 L1121.10 294.5 L1121.1 302 L1107.6 302 Z" fill="#e8d8ea"/><path d="M1107.6 294.5 C1108.50 294.5 1108.14 286.3 1109.18 286.3 L1110.08 286.3 C1111.11 286.3 1110.75 294.5 1111.65 294.5 L1112.10 294.5 C1113.00 294.5 1112.64 286.3 1113.68 286.3 L1114.58 286.3 C1115.61 286.3 1115.25 294.5 1116.15 294.5 L1116.60 294.5 C1117.50 294.5 1117.14 286.3 1118.18 286.3 L1119.08 286.3 C1120.11 286.3 1119.75 294.5 1120.65 294.5 L1121.10 294.5" fill="none" stroke="#9d55aa" stroke-width="0.95"/><line x1="1107.6" y1="302" x2="1121.1" y2="302" stroke="#3f4d88" stroke-width="1.6"/><path d="M1126.5 294.5 C1127.40 294.5 1127.04 286.3 1128.08 286.3 L1128.98 286.3 C1130.01 286.3 1129.65 294.5 1130.55 294.5 L1131.00 294.5 C1131.90 294.5 1131.54 286.3 1132.58 286.3 L1133.48 286.3 C1134.51 286.3 1134.15 294.5 1135.05 294.5 L1135.50 294.5 C1136.40 294.5 1136.04 286.3 1137.08 286.3 L1137.98 286.3 C1139.01 286.3 1138.65 294.5 1139.55 294.5 L1140.00 294.5 L1140.0 302 L1126.5 302 Z" fill="#e8d8ea"/><path d="M1126.5 294.5 C1127.40 294.5 1127.04 286.3 1128.08 286.3 L1128.98 286.3 C1130.01 286.3 1129.65 294.5 1130.55 294.5 L1131.00 294.5 C1131.90 294.5 1131.54 286.3 1132.58 286.3 L1133.48 286.3 C1134.51 286.3 1134.15 294.5 1135.05 294.5 L1135.50 294.5 C1136.40 294.5 1136.04 286.3 1137.08 286.3 L1137.98 286.3 C1139.01 286.3 1138.65 294.5 1139.55 294.5 L1140.00 294.5" fill="none" stroke="#9d55aa" stroke-width="0.95"/><line x1="1126.5" y1="302" x2="1140.0" y2="302" stroke="#3f4d88" stroke-width="1.6"/><path d="M1145.4 294.5 C1146.30 294.5 1145.94 286.3 1146.98 286.3 L1147.88 286.3 C1148.91 286.3 1148.55 294.5 1149.45 294.5 L1149.90 294.5 C1150.80 294.5 1150.44 286.3 1151.48 286.3 L1152.38 286.3 C1153.41 286.3 1153.05 294.5 1153.95 294.5 L1154.40 294.5 C1155.30 294.5 1154.94 286.3 1155.98 286.3 L1156.88 286.3 C1157.91 286.3 1157.55 294.5 1158.45 294.5 L1158.90 294.5 L1158.9 302 L1145.4 302 Z" fill="#e8d8ea"/><path d="M1145.4 294.5 C1146.30 294.5 1145.94 286.3 1146.98 286.3 L1147.88 286.3 C1148.91 286.3 1148.55 294.5 1149.45 294.5 L1149.90 294.5 C1150.80 294.5 1150.44 286.3 1151.48 286.3 L1152.38 286.3 C1153.41 286.3 1153.05 294.5 1153.95 294.5 L1154.40 294.5 C1155.30 294.5 1154.94 286.3 1155.98 286.3 L1156.88 286.3 C1157.91 286.3 1157.55 294.5 1158.45 294.5 L1158.90 294.5" fill="none" stroke="#9d55aa" stroke-width="0.95"/><line x1="1145.4" y1="302" x2="1158.9" y2="302" stroke="#3f4d88" stroke-width="1.6"/><path d="M1164.3 294.5 C1165.20 294.5 1164.84 286.3 1165.88 286.3 L1166.78 286.3 C1167.81 286.3 1167.45 294.5 1168.35 294.5 L1168.80 294.5 C1169.70 294.5 1169.34 286.3 1170.38 286.3 L1171.28 286.3 C1172.31 286.3 1171.95 294.5 1172.85 294.5 L1173.30 294.5 C1174.20 294.5 1173.84 286.3 1174.88 286.3 L1175.78 286.3 C1176.81 286.3 1176.45 294.5 1177.35 294.5 L1177.80 294.5 L1177.8 302 L1164.3 302 Z" fill="#e8d8ea"/><path d="M1164.3 294.5 C1165.20 294.5 1164.84 286.3 1165.88 286.3 L1166.78 286.3 C1167.81 286.3 1167.45 294.5 1168.35 294.5 L1168.80 294.5 C1169.70 294.5 1169.34 286.3 1170.38 286.3 L1171.28 286.3 C1172.31 286.3 1171.95 294.5 1172.85 294.5 L1173.30 294.5 C1174.20 294.5 1173.84 286.3 1174.88 286.3 L1175.78 286.3 C1176.81 286.3 1176.45 294.5 1177.35 294.5 L1177.80 294.5" fill="none" stroke="#9d55aa" stroke-width="0.95"/><line x1="1164.3" y1="302" x2="1177.8" y2="302" stroke="#3f4d88" stroke-width="1.6"/><path d="M1183.2 294.5 C1184.10 294.5 1183.74 286.3 1184.78 286.3 L1185.68 286.3 C1186.71 286.3 1186.35 294.5 1187.25 294.5 L1187.70 294.5 C1188.60 294.5 1188.24 286.3 1189.28 286.3 L1190.18 286.3 C1191.21 286.3 1190.85 294.5 1191.75 294.5 L1192.20 294.5 C1193.10 294.5 1192.74 286.3 1193.78 286.3 L1194.68 286.3 C1195.71 286.3 1195.35 294.5 1196.25 294.5 L1196.70 294.5 L1196.7 302 L1183.2 302 Z" fill="#e8d8ea"/><path d="M1183.2 294.5 C1184.10 294.5 1183.74 286.3 1184.78 286.3 L1185.68 286.3 C1186.71 286.3 1186.35 294.5 1187.25 294.5 L1187.70 294.5 C1188.60 294.5 1188.24 286.3 1189.28 286.3 L1190.18 286.3 C1191.21 286.3 1190.85 294.5 1191.75 294.5 L1192.20 294.5 C1193.10 294.5 1192.74 286.3 1193.78 286.3 L1194.68 286.3 C1195.71 286.3 1195.35 294.5 1196.25 294.5 L1196.70 294.5" fill="none" stroke="#9d55aa" stroke-width="0.95"/><line x1="1183.2" y1="302" x2="1196.7" y2="302" stroke="#3f4d88" stroke-width="1.6"/><path d="M1202.1 294.5 C1203.00 294.5 1202.64 286.3 1203.68 286.3 L1204.58 286.3 C1205.61 286.3 1205.25 294.5 1206.15 294.5 L1206.60 294.5 C1207.50 294.5 1207.14 286.3 1208.18 286.3 L1209.08 286.3 C1210.11 286.3 1209.75 294.5 1210.65 294.5 L1211.10 294.5 C1212.00 294.5 1211.64 286.3 1212.68 286.3 L1213.58 286.3 C1214.61 286.3 1214.25 294.5 1215.15 294.5 L1215.60 294.5 L1215.6 302 L1202.1 302 Z" fill="#e8d8ea"/><path d="M1202.1 294.5 C1203.00 294.5 1202.64 286.3 1203.68 286.3 L1204.58 286.3 C1205.61 286.3 1205.25 294.5 1206.15 294.5 L1206.60 294.5 C1207.50 294.5 1207.14 286.3 1208.18 286.3 L1209.08 286.3 C1210.11 286.3 1209.75 294.5 1210.65 294.5 L1211.10 294.5 C1212.00 294.5 1211.64 286.3 1212.68 286.3 L1213.58 286.3 C1214.61 286.3 1214.25 294.5 1215.15 294.5 L1215.60 294.5" fill="none" stroke="#9d55aa" stroke-width="0.95"/><line x1="1202.1" y1="302" x2="1215.6" y2="302" stroke="#3f4d88" stroke-width="1.6"/><path d="M1221.0 294.5 C1221.90 294.5 1221.54 286.3 1222.58 286.3 L1223.48 286.3 C1224.51 286.3 1224.15 294.5 1225.05 294.5 L1225.50 294.5 C1226.40 294.5 1226.04 286.3 1227.08 286.3 L1227.98 286.3 C1229.01 286.3 1228.65 294.5 1229.55 294.5 L1230.00 294.5 C1230.90 294.5 1230.54 286.3 1231.58 286.3 L1232.48 286.3 C1233.51 286.3 1233.15 294.5 1234.05 294.5 L1234.50 294.5 L1234.5 302 L1221.0 302 Z" fill="#e8d8ea"/><path d="M1221.0 294.5 C1221.90 294.5 1221.54 286.3 1222.58 286.3 L1223.48 286.3 C1224.51 286.3 1224.15 294.5 1225.05 294.5 L1225.50 294.5 C1226.40 294.5 1226.04 286.3 1227.08 286.3 L1227.98 286.3 C1229.01 286.3 1228.65 294.5 1229.55 294.5 L1230.00 294.5 C1230.90 294.5 1230.54 286.3 1231.58 286.3 L1232.48 286.3 C1233.51 286.3 1233.15 294.5 1234.05 294.5 L1234.50 294.5" fill="none" stroke="#9d55aa" stroke-width="0.95"/><line x1="1221.0" y1="302" x2="1234.5" y2="302" stroke="#3f4d88" stroke-width="1.6"/><path d="M1239.9 294.5 C1240.80 294.5 1240.44 286.3 1241.48 286.3 L1242.38 286.3 C1243.41 286.3 1243.05 294.5 1243.95 294.5 L1244.40 294.5 C1245.30 294.5 1244.94 286.3 1245.98 286.3 L1246.88 286.3 C1247.91 286.3 1247.55 294.5 1248.45 294.5 L1248.90 294.5 C1249.80 294.5 1249.44 286.3 1250.48 286.3 L1251.38 286.3 C1252.41 286.3 1252.05 294.5 1252.95 294.5 L1253.40 294.5 L1253.4 302 L1239.9 302 Z" fill="#e8d8ea"/><path d="M1239.9 294.5 C1240.80 294.5 1240.44 286.3 1241.48 286.3 L1242.38 286.3 C1243.41 286.3 1243.05 294.5 1243.95 294.5 L1244.40 294.5 C1245.30 294.5 1244.94 286.3 1245.98 286.3 L1246.88 286.3 C1247.91 286.3 1247.55 294.5 1248.45 294.5 L1248.90 294.5 C1249.80 294.5 1249.44 286.3 1250.48 286.3 L1251.38 286.3 C1252.41 286.3 1252.05 294.5 1252.95 294.5 L1253.40 294.5" fill="none" stroke="#9d55aa" stroke-width="0.95"/><line x1="1239.9" y1="302" x2="1253.4" y2="302" stroke="#3f4d88" stroke-width="1.6"/><path d="M931 294 C931.5 288 932 287 932.8 286.5 L932.8 302 L931 302Z" fill="#efe2f0"/><path d="M931 294 C931.5 288 932 287 932.8 286.5" fill="none" stroke="#b070b8" stroke-width="0.9"/><rect x="1249" y="280" width="10" height="30" fill="#fff"/><path d="M1068.6 302 L1068.6 254.3 C1070 262 1070 270 1072 270 C1074 270 1075 262.6 1076.5 262.6 C1078 262.6 1078.5 278 1080 278 C1081 278 1081.5 270 1082.5 270 L1082.5 302Z" fill="#e4e1f1" stroke="none"/><path d="M1068.6 254.3 C1070 262 1070 270 1072 270 C1074 270 1075 262.6 1076.5 262.6 C1078 262.6 1078.5 278 1080 278 C1081 278 1081.5 270 1082.5 270" fill="none" stroke="#6a5fae" stroke-width="1.2"/><path d="M1086.7 302 L1086.7 270 L1093 270 C1094 270 1094 262.6 1095 262.6 C1096 262.6 1096 270 1097 270 L1100 270 L1100 302Z" fill="#e4e1f1"/><path d="M1086.7 270 L1093 270 C1094 270 1094 262.6 1095 262.6 C1096 262.6 1096 270 1097 270 L1100 270" fill="none" stroke="#6a5fae" stroke-width="1.2"/><path d="M1106 302 L1106 254.3 C1107 262 1107.5 270 1109 270 L1111.5 270 C1112.5 270 1112.5 262.6 1113.5 262.6 C1114.5 262.6 1114.5 270 1115.5 270 L1118.8 270 L1118.8 302Z" fill="#e4e1f1"/><path d="M1106 254.3 C1107 262 1107.5 270 1109 270 L1111.5 270 C1112.5 270 1112.5 262.6 1113.5 262.6 C1114.5 262.6 1114.5 270 1115.5 270 L1118.8 270 L1122 270 L1125 302" fill="none" stroke="#6a5fae" stroke-width="1.2"/><line x1="931" y1="286.5" x2="1249" y2="286.5" stroke="#8a80bc" stroke-width="0.8" stroke-dasharray="1 17.9" stroke-dashoffset="-4"/><line x1="1068" y1="270" x2="1249" y2="270" stroke="#7d72b4" stroke-width="0.8" stroke-dasharray="1.5 3 4 3" opacity="0.6"/><line x1="931" y1="302" x2="1249" y2="302" stroke="#3f4d88" stroke-width="1.4" stroke-dasharray="1.5 2.5" opacity="0.7"/><path d="M1092 302 L1093 238.8 L1094.3 238.8 L1095.5 198.3 L1097.5 210 L1098 302Z" fill="#ecd8e6" stroke="none"/><path d="M1092 302 L1093 238.8 L1094.3 238.8 L1095.5 198.3 L1097 240 L1097.5 302" fill="none" stroke="#84c084" stroke-width="1"/><path d="M1095 302 L1096 213 L1098 220 L1099 302" fill="none" stroke="#e4b2d2" stroke-width="1"/><rect x="1055.5" y="254" width="4" height="48" fill="#cfcaec"/><rect x="1056.5" y="270" width="2.2" height="32" fill="#2e5aa8"/><rect x="1203" y="262.7" width="11" height="39.3" fill="#ece3ee" opacity="0.8"/><rect x="1217" y="262.7" width="13.5" height="39.3" fill="#ece3ee" opacity="0.8"/><rect x="1236" y="262.7" width="13" height="39.3" fill="#ece3ee" opacity="0.8"/><path d="M1205 302 L1205 166.6 L1207 166.6 L1207 302" stroke="#f0c474" fill="#f7ead6" stroke-width="1" fill-opacity="0.6"/><path d="M1208.2 302 L1208.2 182.6 L1210 182.6 L1210 302" stroke="#e7a868" fill="#f3dcc8" stroke-width="1" fill-opacity="0.6"/><path d="M1210.3 302 L1210.3 206.6 L1211.8 206.6 L1211.8 302" stroke="#6a62a8" fill="#dcd6ee" stroke-width="1" fill-opacity="0.6"/><path d="M1219 302 L1219 174.6 L1220.8 174.6 L1220.8 302" stroke="#a8743c" fill="#e9d9c8" stroke-width="1" fill-opacity="0.6"/><path d="M1221.5 302 L1221.5 150.6 L1223 150.6 L1223 302" stroke="#f5dcb6" fill="#faf0e2" stroke-width="1" fill-opacity="0.6"/><path d="M1226.8 302 L1226.8 134.6 L1228.4 134.6 L1228.4 302" stroke="#2a3a72" fill="#d0d4e6" stroke-width="1" fill-opacity="0.6"/><path d="M1228.6 302 L1228.6 134.6 L1230 134.6 L1230 302" stroke="#3a4a86" fill="#d0d4e6" stroke-width="1" fill-opacity="0.6"/><path d="M1236.5 302 L1236.5 166.6 L1238 166.6 L1238 302" stroke="#eeb4da" fill="#f8e4f0" stroke-width="1" fill-opacity="0.6"/><path d="M1238.4 302 L1238.4 190.6 L1240 190.6 L1240 302" stroke="#b08a36" fill="#eadfc4" stroke-width="1" fill-opacity="0.6"/><path d="M1242 302 L1242 182.6 L1243.6 182.6 L1243.6 302" stroke="#e6a860" fill="#f3dcc6" stroke-width="1" fill-opacity="0.6"/><path d="M1245.3 302 L1245.3 158.6 L1247 158.6 L1247 302" stroke="#e2c464" fill="#f4ecc8" stroke-width="1" fill-opacity="0.6"/><path d="M1247.8 302 L1247.8 134.6 L1249 134.6 L1249 302" stroke="#84c084" fill="#dcefdc" stroke-width="1" fill-opacity="0.6"/><path d="M1203 272 L1205 272 C1206 272 1206 262.7 1207 262.7 C1208 262.7 1208 272 1209 272 L1214 272" fill="none" stroke="#6a5fae" stroke-width="1.1"/><path d="M1217 272 L1219 272 C1220 272 1220 262.7 1221 262.7 C1222 262.7 1222 272 1223 272 L1230.5 272" fill="none" stroke="#6a5fae" stroke-width="1.1"/><path d="M1236 272 L1238 272 C1239 272 1239 262.7 1240 262.7 C1241 262.7 1241 272 1242 272 L1249 272" fill="none" stroke="#6a5fae" stroke-width="1.1"/><path d="M1183.2 294.5 C1184.10 294.5 1183.74 286.3 1184.78 286.3 L1185.68 286.3 C1186.71 286.3 1186.35 294.5 1187.25 294.5 L1187.70 294.5 C1188.60 294.5 1188.24 286.3 1189.28 286.3 L1190.18 286.3 C1191.21 286.3 1190.85 294.5 1191.75 294.5 L1192.20 294.5 C1193.10 294.5 1192.74 286.3 1193.78 286.3 L1194.68 286.3 C1195.71 286.3 1195.35 294.5 1196.25 294.5 L1196.70 294.5" fill="none" stroke="#9d55aa" stroke-width="0.95"/><path d="M1202.1 294.5 C1203.00 294.5 1202.64 286.3 1203.68 286.3 L1204.58 286.3 C1205.61 286.3 1205.25 294.5 1206.15 294.5 L1206.60 294.5 C1207.50 294.5 1207.14 286.3 1208.18 286.3 L1209.08 286.3 C1210.11 286.3 1209.75 294.5 1210.65 294.5 L1211.10 294.5 C1212.00 294.5 1211.64 286.3 1212.68 286.3 L1213.58 286.3 C1214.61 286.3 1214.25 294.5 1215.15 294.5 L1215.60 294.5" fill="none" stroke="#9d55aa" stroke-width="0.95"/><path d="M1221.0 294.5 C1221.90 294.5 1221.54 286.3 1222.58 286.3 L1223.48 286.3 C1224.51 286.3 1224.15 294.5 1225.05 294.5 L1225.50 294.5 C1226.40 294.5 1226.04 286.3 1227.08 286.3 L1227.98 286.3 C1229.01 286.3 1228.65 294.5 1229.55 294.5 L1230.00 294.5 C1230.90 294.5 1230.54 286.3 1231.58 286.3 L1232.48 286.3 C1233.51 286.3 1233.15 294.5 1234.05 294.5 L1234.50 294.5" fill="none" stroke="#9d55aa" stroke-width="0.95"/><path d="M1239.9 294.5 C1240.80 294.5 1240.44 286.3 1241.48 286.3 L1242.38 286.3 C1243.41 286.3 1243.05 294.5 1243.95 294.5 L1244.40 294.5 C1245.30 294.5 1244.94 286.3 1245.98 286.3 L1246.88 286.3 C1247.91 286.3 1247.55 294.5 1248.45 294.5 L1248.90 294.5 C1249.80 294.5 1249.44 286.3 1250.48 286.3 L1251.38 286.3 C1252.41 286.3 1252.05 294.5 1252.95 294.5 L1253.40 294.5" fill="none" stroke="#9d55aa" stroke-width="0.95"/></g><line x1="931" y1="302.0" x2="1248.7" y2="302.0" stroke="#d6d6d6" stroke-width="1"/><line x1="983.0" y1="302.0" x2="983.0" y2="306.0" stroke="#d6d6d6" stroke-width="1"/><line x1="1036.2" y1="302.0" x2="1036.2" y2="306.0" stroke="#d6d6d6" stroke-width="1"/><line x1="1089.4" y1="302.0" x2="1089.4" y2="306.0" stroke="#d6d6d6" stroke-width="1"/><line x1="1142.6" y1="302.0" x2="1142.6" y2="306.0" stroke="#d6d6d6" stroke-width="1"/><line x1="1195.8" y1="302.0" x2="1195.8" y2="306.0" stroke="#d6d6d6" stroke-width="1"/><line x1="1249.0" y1="302.0" x2="1249.0" y2="306.0" stroke="#d6d6d6" stroke-width="1"/><line x1="1248.7" y1="302.0" x2="1248.7" y2="306.0" stroke="#d6d6d6" stroke-width="1"/></svg>
<div class="yl" style="right:331.5px;top:25.7px">1.5</div>
<div class="yl" style="right:331.5px;top:85.4px">1</div>
<div class="yl" style="right:331.5px;top:145.4px">0.5</div>
<div class="yl" style="right:331.5px;top:205.1px">0</div>
<div class="a" style="left:0;top:0;width:344.5px;height:242px;overflow:hidden">
<div class="xl" style="left:58.0px;width:40px;text-align:center;text-indent:-0.3px;top:218.0px">10:20</div>
<div class="xl" style="left:111.2px;width:40px;text-align:center;text-indent:-0.3px;top:218.0px">10:25</div>
<div class="xl" style="left:164.4px;width:40px;text-align:center;text-indent:-0.3px;top:218.0px">10:30</div>
<div class="xl" style="left:217.6px;width:40px;text-align:center;text-indent:-0.3px;top:218.0px">10:35</div>
<div class="xl" style="left:270.8px;width:40px;text-align:center;text-indent:-0.3px;top:218.0px">10:40</div>
<div class="xl" style="left:324.0px;width:40px;text-align:center;text-indent:-0.3px;top:218.0px">10:45</div>
</div>
<div class="a" style="left:344.5px;top:234px;width:4px;height:4px;border-right:1px solid #999;border-bottom:1px solid #999"></div>
</div>
<div class="pn" style="left:183px;top:341px;width:353.0px;height:240.0px;overflow:hidden">
<div class="pt" style="top:6.5px">Size</div>
<svg class="a" style="left:0;top:0" width="353.0" height="240.0" viewBox="183 341 353.0 240.0"><line x1="234.5" y1="372.5" x2="527.5" y2="372.5" stroke="#f1f1f1" stroke-width="1"/><line x1="234.5" y1="411.3" x2="527.5" y2="411.3" stroke="#f1f1f1" stroke-width="1"/><line x1="234.5" y1="449.6" x2="527.5" y2="449.6" stroke="#f1f1f1" stroke-width="1"/><defs><clipPath id="c183341"><rect x="233.5" y="341" width="294.5" height="149.2"/></clipPath></defs><g clip-path="url(#c183341)"><line x1="234.5" y1="440" x2="527.5" y2="392.5" stroke="#f9e0d2" stroke-width="1.2"/><line x1="234.5" y1="477.7" x2="527.5" y2="398.8" stroke="#d2f1f7" stroke-width="1.2"/><path d="M234.5 488 L350 488 L420 484 L527.5 479" stroke="#f8d9de" fill="none" stroke-width="1.1"/><path d="M234.5 474 L349.5 474 L349.5 466 L527.5 466" stroke="#c6b2a0" fill="none" stroke-width="1.25"/></g><line x1="234.5" y1="488.2" x2="527.5" y2="488.2" stroke="#d6d6d6" stroke-width="1"/><line x1="282.6" y1="488.2" x2="282.6" y2="492.2" stroke="#d6d6d6" stroke-width="1"/><line x1="331.5" y1="488.2" x2="331.5" y2="492.2" stroke="#d6d6d6" stroke-width="1"/><line x1="380.3" y1="488.2" x2="380.3" y2="492.2" stroke="#d6d6d6" stroke-width="1"/><line x1="429.2" y1="488.2" x2="429.2" y2="492.2" stroke="#d6d6d6" stroke-width="1"/><line x1="478.0" y1="488.2" x2="478.0" y2="492.2" stroke="#d6d6d6" stroke-width="1"/><line x1="526.9" y1="488.2" x2="526.9" y2="492.2" stroke="#d6d6d6" stroke-width="1"/><line x1="527.5" y1="488.2" x2="527.5" y2="492.2" stroke="#d6d6d6" stroke-width="1"/></svg>
<div class="yl" style="right:306.5px;top:25.5px">585.9KiB</div>
<div class="yl" style="right:306.5px;top:64.3px">390.6KiB</div>
<div class="yl" style="right:306.5px;top:102.6px">195.3KiB</div>
<div class="yl" style="right:306.5px;top:141.2px">0B</div>
<div class="a" style="left:0;top:0;width:345.3px;height:240px;overflow:hidden">
<div class="xl" style="left:79.6px;width:40px;text-align:center;text-indent:-0.3px;top:154.2px">10:20</div>
<div class="xl" style="left:128.5px;width:40px;text-align:center;text-indent:-0.3px;top:154.2px">10:25</div>
<div class="xl" style="left:177.3px;width:40px;text-align:center;text-indent:-0.3px;top:154.2px">10:30</div>
<div class="xl" style="left:226.2px;width:40px;text-align:center;text-indent:-0.3px;top:154.2px">10:35</div>
<div class="xl" style="left:275.0px;width:40px;text-align:center;text-indent:-0.3px;top:154.2px">10:40</div>
<div class="xl" style="left:323.9px;width:40px;text-align:center;text-indent:-0.3px;top:154.2px">10:45</div>
</div>
<div class="lg" style="left:7px;top:179px;width:325px;height:57.5px;overflow:hidden">
<div class="li" style="left:18.80000000000001px;top:4.8px"><span class="dot" style="left:-12.400000000000006px;background:#73b56a"></span>Topic-1</div>
<div class="li" style="left:18.80000000000001px;top:20.4px"><span class="dot" style="left:-12.400000000000006px;background:#e8b440"></span>Topic-10</div>
<div class="li" style="left:18.80000000000001px;top:36.0px"><span class="dot" style="left:-12.400000000000006px;background:#62c6e0"></span>Topic-11</div>
<div class="li" style="left:18.80000000000001px;top:51.6px"><span class="dot" style="left:-12.400000000000006px;background:#e89060"></span>Topic-12</div>
</div>
<div class="a" style="left:339px;top:173px;width:13px;height:67px;background:#f1f1f1"></div>
<div class="a" style="left:342.5px;top:178.3px;width:0;height:0;border-left:3px solid transparent;border-right:3px solid transparent;border-bottom:3px solid #a3a3a3"></div>
<div class="a" style="left:340.5px;top:187px;width:10px;height:13px;background:#c1c1c1"></div>
<div class="a" style="left:342.5px;top:227.2px;width:0;height:0;border-left:3px solid transparent;border-right:3px solid transparent;border-top:3px solid #505050"></div>
</div>
<div class="pn" style="left:544px;top:341px;width:353.0px;height:240.0px;overflow:hidden">
<div class="pt" style="top:6.5px">Bytes In</div>
<svg class="a" style="left:0;top:0" width="353.0" height="240.0" viewBox="544 341 353.0 240.0"><line x1="592.5" y1="372.5" x2="888" y2="372.5" stroke="#f1f1f1" stroke-width="1"/><line x1="592.5" y1="410.7" x2="888" y2="410.7" stroke="#f1f1f1" stroke-width="1"/><line x1="592.5" y1="449.3" x2="888" y2="449.3" stroke="#f1f1f1" stroke-width="1"/><defs><clipPath id="c544341"><rect x="591.5" y="341" width="297.0" height="149.10000000000002"/></clipPath></defs><g clip-path="url(#c544341)"><polyline points="594.0,488 596.3,480 598.7,488 601.0,480 603.3,488 605.7,480 608.0,488" fill="none" stroke="#d3f3f8" stroke-width="0.9"/><polyline points="611.3,488 613.6,480 616.0,488 618.3,480 620.6,488 623.0,480 625.3,488" fill="none" stroke="#d3f3f8" stroke-width="0.9"/><polyline points="628.6,488 630.9,480 633.3,488 635.6,480 637.9,488 640.3,480 642.6,488" fill="none" stroke="#d3f3f8" stroke-width="0.9"/><polyline points="645.9,488 648.2,480 650.6,488 652.9,480 655.2,488 657.6,480 659.9,488" fill="none" stroke="#d3f3f8" stroke-width="0.9"/><polyline points="663.2,488 665.5,480 667.9,488 670.2,480 672.5,488 674.9,480 677.2,488" fill="none" stroke="#d3f3f8" stroke-width="0.9"/><polyline points="680.5,488 682.8,480 685.2,488 687.5,480 689.8,488 692.2,480 694.5,488" fill="none" stroke="#d3f3f8" stroke-width="0.9"/><polyline points="697.8,488 700.1,480 702.5,488 704.8,480 707.1,488 709.5,480 711.8,488" fill="none" stroke="#d3f3f8" stroke-width="0.9"/><polyline points="715.1,488 717.4,480 719.8,488 722.1,480 724.4,488 726.8,480 729.1,488" fill="none" stroke="#d3f3f8" stroke-width="0.9"/><polyline points="732.4,488 734.7,480 737.1,488 739.4,480 741.7,488 744.1,480 746.4,488" fill="none" stroke="#d3f3f8" stroke-width="0.9"/><polyline points="749.7,488 752.0,480 754.4,488 756.7,480 759.0,488 761.4,480 763.7,488" fill="none" stroke="#d3f3f8" stroke-width="0.9"/><polyline points="767.0,488 769.3,480 771.7,488 774.0,480 776.3,488 778.7,480 781.0,488" fill="none" stroke="#d3f3f8" stroke-width="0.9"/><polyline points="784.3,488 786.6,480 789.0,488 791.3,480 793.6,488 796.0,480 798.3,488" fill="none" stroke="#d3f3f8" stroke-width="0.9"/><polyline points="801.6,488 803.9,480 806.3,488 808.6,480 810.9,488 813.3,480 815.6,488" fill="none" stroke="#d3f3f8" stroke-width="0.9"/><polyline points="818.9,488 821.2,480 823.6,488 825.9,480 828.2,488 830.6,480 832.9,488" fill="none" stroke="#d3f3f8" stroke-width="0.9"/><polyline points="836.2,488 838.5,480 840.9,488 843.2,480 845.5,488 847.9,480 850.2,488" fill="none" stroke="#d3f3f8" stroke-width="0.9"/><polyline points="853.5,488 855.8,480 858.2,488 860.5,480 862.8,488 865.2,480 867.5,488" fill="none" stroke="#d3f3f8" stroke-width="0.9"/><polyline points="870.8,488 873.1,480 875.5,488 877.8,480 880.1,488 882.5,480 884.8,488" fill="none" stroke="#d3f3f8" stroke-width="0.9"/><path d="M725 486 L728 484.5 L731 487 L740 486 L745 485.5 L755 486 L760 484.5 L764 486 L772 485.5" stroke="#ebc468" fill="none" stroke-width="1"/><line x1="592.5" y1="488" x2="888" y2="488" stroke="#5a6a5a" stroke-width="1.6"/><line x1="600" y1="488" x2="622" y2="488" stroke="#e0a050" stroke-width="1.6"/><line x1="622" y1="488" x2="634" y2="488" stroke="#9060a8" stroke-width="1.6"/><path d="M709 488 L710 388 L711 388 L712 488" stroke="#b9ad9f" fill="#d6ccc2" stroke-width="1"/><line x1="710" y1="488" x2="710" y2="449" stroke="#9a8c7e" stroke-width="1.1"/></g><line x1="592.5" y1="488.1" x2="888" y2="488.1" stroke="#d6d6d6" stroke-width="1"/><line x1="641.0" y1="488.1" x2="641.0" y2="492.1" stroke="#d6d6d6" stroke-width="1"/><line x1="690.6" y1="488.1" x2="690.6" y2="492.1" stroke="#d6d6d6" stroke-width="1"/><line x1="740.2" y1="488.1" x2="740.2" y2="492.1" stroke="#d6d6d6" stroke-width="1"/><line x1="789.8" y1="488.1" x2="789.8" y2="492.1" stroke="#d6d6d6" stroke-width="1"/><line x1="839.4" y1="488.1" x2="839.4" y2="492.1" stroke="#d6d6d6" stroke-width="1"/><line x1="889.0" y1="488.1" x2="889.0" y2="492.1" stroke="#d6d6d6" stroke-width="1"/><line x1="888.0" y1="488.1" x2="888.0" y2="492.1" stroke="#d6d6d6" stroke-width="1"/></svg>
<div class="yl" style="right:309.2px;top:25.5px">2.9KiB/s</div>
<div class="yl" style="right:309.2px;top:63.7px">2KiB/s</div>
<div class="yl" style="right:309.2px;top:102.3px">1000B/s</div>
<div class="yl" style="right:309.2px;top:141.1px">0B/s</div>
<div class="a" style="left:0;top:0;width:344.8px;height:240px;overflow:hidden">
<div class="xl" style="left:77.0px;width:40px;text-align:center;text-indent:-0.3px;top:154.1px">10:20</div>
<div class="xl" style="left:126.6px;width:40px;text-align:center;text-indent:-0.3px;top:154.1px">10:25</div>
<div class="xl" style="left:176.2px;width:40px;text-align:center;text-indent:-0.3px;top:154.1px">10:30</div>
<div class="xl" style="left:225.8px;width:40px;text-align:center;text-indent:-0.3px;top:154.1px">10:35</div>
<div class="xl" style="left:275.4px;width:40px;text-align:center;text-indent:-0.3px;top:154.1px">10:40</div>
<div class="xl" style="left:325.0px;width:40px;text-align:center;text-indent:-0.3px;top:154.1px">10:45</div>
</div>
<div class="lg" style="left:7px;top:179px;width:325px;height:57.5px;overflow:hidden">
<div class="li" style="left:18.5px;top:4.8px"><span class="dot" style="left:-12.700000000000045px;background:#73b56a"></span>Topic-1-0</div>
<div class="li" style="left:18.5px;top:20.4px"><span class="dot" style="left:-12.700000000000045px;background:#e8b440"></span>Topic-10-0</div>
<div class="li" style="left:18.5px;top:36.0px"><span class="dot" style="left:-12.700000000000045px;background:#62c6e0"></span>Topic-11-0</div>
<div class="li" style="left:18.5px;top:51.6px"><span class="dot" style="left:-12.700000000000045px;background:#e89060"></span>Topic-12-0</div>
</div>
<div class="a" style="left:339px;top:173px;width:13px;height:67px;background:#f1f1f1"></div>
<div class="a" style="left:342.5px;top:178.3px;width:0;height:0;border-left:3px solid transparent;border-right:3px solid transparent;border-bottom:3px solid #a3a3a3"></div>
<div class="a" style="left:340.5px;top:187px;width:10px;height:13px;background:#c1c1c1"></div>
<div class="a" style="left:342.5px;top:227.2px;width:0;height:0;border-left:3px solid transparent;border-right:3px solid transparent;border-top:3px solid #505050"></div>
</div>
<div class="pn" style="left:905px;top:341px;width:352.5px;height:240.0px;overflow:hidden">
<div class="pt" style="top:6.5px">Bytes Out</div>
<svg class="a" style="left:0;top:0" width="352.5" height="240.0" viewBox="905 341 352.5 240.0"><line x1="953.5" y1="372.5" x2="1249" y2="372.5" stroke="#f1f1f1" stroke-width="1"/><line x1="953.5" y1="401.0" x2="1249" y2="401.0" stroke="#f1f1f1" stroke-width="1"/><line x1="953.5" y1="430.0" x2="1249" y2="430.0" stroke="#f1f1f1" stroke-width="1"/><line x1="953.5" y1="458.5" x2="1249" y2="458.5" stroke="#f1f1f1" stroke-width="1"/><defs><clipPath id="c905341"><rect x="952.5" y="341" width="297.0" height="149.10000000000002"/></clipPath></defs><g clip-path="url(#c905341)"><line x1="953.5" y1="488" x2="1249" y2="488" stroke="#e0c0a0" stroke-width="1.3"/><line x1="975" y1="488" x2="990" y2="488" stroke="#9060a8" stroke-width="1.8"/><line x1="1003" y1="488" x2="1088" y2="488" stroke="#8a3a30" stroke-width="1.8"/><line x1="1115" y1="488" x2="1125" y2="488" stroke="#6060a0" stroke-width="1.8"/><path d="M997 488 L999 482 L1002 482 L1004 488" stroke="#62c6e0" fill="none" stroke-width="1.2"/><path d="M999 488 L1001 482 L1004 482 L1006 488" stroke="#e89050" fill="none" stroke-width="1.2"/><path d="M1098 488 L1100 470 L1102 488" stroke="#e89050" fill="none" stroke-width="1.2"/><path d="M1102.3 488 L1103.3 376 L1105 376 L1106 488" stroke="#8cc88c" fill="none" stroke-width="1.1"/><path d="M1104 488 L1105.3 376 L1107 376 L1108.2 488" stroke="#d88a40" fill="none" stroke-width="1.2"/><path d="M1170 488 L1172 481 L1174 488" stroke="#8cc88c" fill="none" stroke-width="1.2"/><path d="M1108 488 L1110 482 L1112 488" stroke="#8cc88c" fill="none" stroke-width="1.2"/><path d="M1202.0 488 L1202.7 376 L1203.3 376 L1204.0 488" stroke="#7060a8" stroke-width="1.1" fill="none"/><path d="M1208.7 488 L1209.4 376 L1210.0 376 L1210.7 488" stroke="#9ccc9c" stroke-width="1.2" fill="none"/><path d="M1210.5 488 L1211.2 376 L1211.8 376 L1212.5 488" stroke="#3a4a80" stroke-width="1.2" fill="none"/><path d="M1212.0 488 L1212.7 376 L1213.3 376 L1214.0 488" stroke="#8a70b0" stroke-width="1.1" fill="none"/><path d="M1213.4 488 L1214.1 376 L1214.7 376 L1215.4 488" stroke="#8cc88c" stroke-width="1.0" fill="none"/><path d="M1220.0 488 L1220.7 376 L1221.3 376 L1222.0 488" stroke="#b8d0f0" stroke-width="1.1" fill="none"/><path d="M1221.6 488 L1222.3 376 L1222.9 376 L1223.6 488" stroke="#f0b8d8" stroke-width="1.1" fill="none"/><path d="M1223.7 488 L1224.4 376 L1225.0 376 L1225.7 488" stroke="#a8d4a8" stroke-width="1.1" fill="none"/><path d="M1226.4 488 L1227.1 376 L1227.7 376 L1228.4 488" stroke="#8cc88c" stroke-width="1.1" fill="none"/><path d="M1228.7 488 L1229.4 376 L1230.0 376 L1230.7 488" stroke="#c8b0e0" stroke-width="1.1" fill="none"/><path d="M1230.5 488 L1231.2 376 L1231.8 376 L1232.5 488" stroke="#e0d0f0" stroke-width="1.0" fill="none"/><path d="M1237.7 488 L1238.4 376 L1239.0 376 L1239.7 488" stroke="#b04888" stroke-width="1.2" fill="none"/><path d="M1239.5 488 L1240.2 376 L1240.8 376 L1241.5 488" stroke="#c070b0" stroke-width="1.1" fill="none"/><path d="M1241.7 488 L1242.4 376 L1243.0 376 L1243.7 488" stroke="#8cc88c" stroke-width="1.1" fill="none"/><path d="M1244.0 488 L1244.7 376 L1245.3 376 L1246.0 488" stroke="#c8c070" stroke-width="1.1" fill="none"/><path d="M1246.2 488 L1246.9 376 L1247.5 376 L1248.2 488" stroke="#e09a48" stroke-width="1.3" fill="none"/></g><line x1="953.5" y1="488.1" x2="1249" y2="488.1" stroke="#d6d6d6" stroke-width="1"/><line x1="1001.5" y1="488.1" x2="1001.5" y2="492.1" stroke="#d6d6d6" stroke-width="1"/><line x1="1051.1" y1="488.1" x2="1051.1" y2="492.1" stroke="#d6d6d6" stroke-width="1"/><line x1="1100.7" y1="488.1" x2="1100.7" y2="492.1" stroke="#d6d6d6" stroke-width="1"/><line x1="1150.3" y1="488.1" x2="1150.3" y2="492.1" stroke="#d6d6d6" stroke-width="1"/><line x1="1199.9" y1="488.1" x2="1199.9" y2="492.1" stroke="#d6d6d6" stroke-width="1"/><line x1="1249.5" y1="488.1" x2="1249.5" y2="492.1" stroke="#d6d6d6" stroke-width="1"/><line x1="1249.0" y1="488.1" x2="1249.0" y2="492.1" stroke="#d6d6d6" stroke-width="1"/></svg>
<div class="yl" style="right:309.0px;top:25.5px">7.8KiB/s</div>
<div class="yl" style="right:309.0px;top:54.0px">5.9KiB/s</div>
<div class="yl" style="right:309.0px;top:83.0px">3.9KiB/s</div>
<div class="yl" style="right:309.0px;top:111.5px">2KiB/s</div>
<div class="yl" style="right:309.0px;top:141.1px">0B/s</div>
<div class="a" style="left:0;top:0;width:344.8px;height:240px;overflow:hidden">
<div class="xl" style="left:76.5px;width:40px;text-align:center;text-indent:-0.3px;top:154.1px">10:20</div>
<div class="xl" style="left:126.1px;width:40px;text-align:center;text-indent:-0.3px;top:154.1px">10:25</div>
<div class="xl" style="left:175.7px;width:40px;text-align:center;text-indent:-0.3px;top:154.1px">10:30</div>
<div class="xl" style="left:225.3px;width:40px;text-align:center;text-indent:-0.3px;top:154.1px">10:35</div>
<div class="xl" style="left:274.9px;width:40px;text-align:center;text-indent:-0.3px;top:154.1px">10:40</div>
<div class="xl" style="left:324.5px;width:40px;text-align:center;text-indent:-0.3px;top:154.1px">10:45</div>
</div>
<div class="lg" style="left:7px;top:179px;width:325px;height:57.5px;overflow:hidden">
<div class="li" style="left:18.299999999999955px;top:4.8px"><span class="dot" style="left:-12.299999999999955px;background:#73b56a"></span>Topic-1-0</div>
<div class="li" style="left:18.299999999999955px;top:20.4px"><span class="dot" style="left:-12.299999999999955px;background:#e8b440"></span>Topic-10-0</div>
<div class="li" style="left:18.299999999999955px;top:36.0px"><span class="dot" style="left:-12.299999999999955px;background:#62c6e0"></span>Topic-11-0</div>
<div class="li" style="left:18.299999999999955px;top:51.6px"><span class="dot" style="left:-12.299999999999955px;background:#e89060"></span>Topic-12-0</div>
</div>
<div class="a" style="left:338px;top:173px;width:13px;height:67px;background:#f1f1f1"></div>
<div class="a" style="left:341.5px;top:178.3px;width:0;height:0;border-left:3px solid transparent;border-right:3px solid transparent;border-bottom:3px solid #a3a3a3"></div>
<div class="a" style="left:339.5px;top:187px;width:10px;height:13px;background:#c1c1c1"></div>
<div class="a" style="left:341.5px;top:227.2px;width:0;height:0;border-left:3px solid transparent;border-right:3px solid transparent;border-top:3px solid #505050"></div>
</div>
<div class="a" style="left:1267px;top:0;width:13px;height:579px;background:#f1f1f1"></div>
<div class="a" style="left:1268px;top:14px;width:11px;height:420px;background:#c1c1c1"></div>
<div class="a" style="left:1270px;top:6px;width:0;height:0;border-left:3.5px solid transparent;border-right:3.5px solid transparent;border-bottom:3.5px solid #a3a3a3"></div>
<div class="a" style="left:1270px;top:569px;width:0;height:0;border-left:3.5px solid transparent;border-right:3.5px solid transparent;border-top:3.5px solid #505050"></div>
<div class="a" style="left:1252px;top:460.7px;width:32px;height:98px;background:#6a4fb6;border-radius:7px 0 0 7px"></div>
<svg class="a" style="left:1261px;top:473px" width="13" height="13" viewBox="0 0 13 13"><circle cx="6.5" cy="6.5" r="5.3" stroke="#fff" stroke-width="1.2" fill="none"/><circle cx="4.7" cy="5.3" r="0.8" fill="#fff"/><circle cx="8.3" cy="5.3" r="0.8" fill="#fff"/><path d="M4 7.5 Q6.5 10 9 7.5" stroke="#fff" stroke-width="1.1" fill="none"/></svg>
<div class="a" style="left:1274px;top:494px;font-size:11.3px;font-weight:700;color:#fff;transform:rotate(90deg);transform-origin:0 0;white-space:nowrap;line-height:15px">Feedback</div></body></html>
